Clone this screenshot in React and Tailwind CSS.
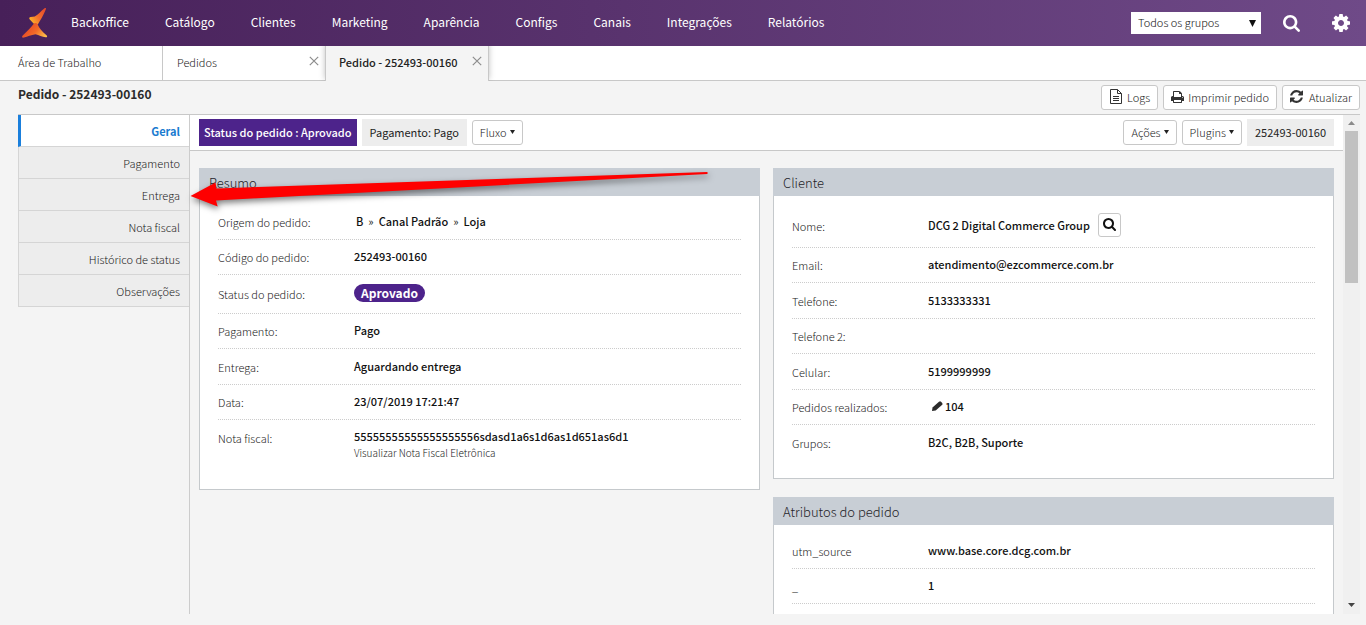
const NAV = ["Backoffice", "Catálogo", "Clientes", "Marketing", "Aparência", "Configs", "Canais", "Integrações", "Relatórios"];
const SECTIONS = ["Pagamento", "Entrega", "Nota fiscal", "Histórico de status", "Observações"];

function Logo() {
  return (
    <svg viewBox="0 0 40 38" className="h-[38px] w-10" aria-hidden="true">
      <defs>
        <linearGradient id="flameTop" x1="0" y1="0.6" x2="1" y2="0">
          <stop offset="0" stopColor="#fbae2a" />
          <stop offset="0.4" stopColor="#f4702c" />
          <stop offset="1" stopColor="#e2452c" />
        </linearGradient>
        <linearGradient id="flameBase" x1="0" y1="0.3" x2="1" y2="0.8">
          <stop offset="0" stopColor="#e23d26" />
          <stop offset="0.55" stopColor="#f26a28" />
          <stop offset="1" stopColor="#fdc04a" />
        </linearGradient>
      </defs>
      <path d="M28.300 4.400c1.100-.9 2-.4 1.600.8C27.500 11 24.500 16 21.800 20.500L17.800 19.800l-4-4.300c-1-1.100-.6-2.300.8-2.500l4.200-.5C22.500 10.500 25 7 28.300 4.400z" fill="url(#flameTop)" />
      <path d="M18 19.500c1.500-1 2.800-.5 3.600.8C23 24 26 27.500 30.500 31.200c1.200 1.200.6 2.300-.9 2.100C26 33 23 31 19.500 30.300 15 31 11.500 32.800 8 33.600c-1.700.4-2.500-.6-1.500-1.900C11 27.500 15 23.500 18 19.500z" fill="url(#flameBase)" />
    </svg>
  );
}

function SearchIcon({ className }) {
  return (
    <svg viewBox="0 0 1664 1664" className={className} fill="currentColor" aria-hidden="true">
      <path d="M1152 704q0-185-131.500-316.500t-316.500-131.500-316.500 131.500-131.500 316.500 131.500 316.500 316.500 131.500 316.500-131.500 131.500-316.500zm512 832q0 52-38 90t-90 38q-54 0-90-38l-343-342q-179 124-399 124-143 0-273.500-55.500t-225-150-150-225-55.500-273.500 55.500-273.500 150-225 225-150 273.500-55.500 273.500 55.500 225 150 150 225 55.500 273.500q0 220-124 399l343 343q37 37 37 90z" />
    </svg>
  );
}

function CogIcon() {
  return (
    <svg viewBox="0 128 1536 1536" className="size-[18px]" fill="currentColor" aria-hidden="true">
      <path d="M1024 896q0-106-75-181t-181-75-181 75-75 181 75 181 181 75 181-75 75-181zm512-109v222q0 12-8 23t-20 13l-185 28q-19 54-39 91 35 50 107 138 10 12 10 25t-9 23q-27 37-99 108t-94 71q-12 0-26-9l-138-108q-44 23-91 38-16 136-29 186-7 28-36 28h-222q-14 0-24.500-8.500t-11.500-21.500l-28-184q-49-16-90-37l-141 107q-10 9-25 9-14 0-25-11-126-114-165-168-7-10-7-23 0-12 8-23 15-21 51-66.500t54-70.500q-27-50-41-99l-183-27q-13-2-21-12.500t-8-23.500v-222q0-12 8-23t19-13l186-28q14-46 39-92-40-57-107-138-10-12-10-24 0-10 9-23 26-36 98.500-107.500t94.500-71.500q13 0 26 10l138 107q44-23 91-38 16-136 29-186 7-28 36-28h222q14 0 24.500 8.500t11.500 21.500l28 184q49 16 90 37l142-107q9-9 24-9 13 0 25 10 129 119 165 170 7 8 7 22 0 12-8 23-15 21-51 66.500t-54 70.500q26 50 41 98l183 28q13 2 21 12.500t8 23.500z" />
    </svg>
  );
}

function PrintIcon() {
  return (
    <svg viewBox="0 0 1664 1664" className="mr-1 mb-0.5 size-[13px]" fill="#333" aria-hidden="true">
      <path d="M384 1536h896v-256h-896v256zm0-640h896v-384h-160q-40 0-68-28t-28-68v-160h-640v640zm1152 64q0-26-19-45t-45-19-45 19-19 45 19 45 45 19 45-19 19-45zm128 0v416q0 13-9.500 22.500t-22.500 9.500h-224v160q0 40-28 68t-68 28h-960q-40 0-68-28t-28-68v-160h-224q-13 0-22.500-9.500t-9.500-22.500v-416q0-79 56.500-135.500t135.500-56.500h64v-544q0-40 28-68t68-28h672q40 0 88 20t76 48l152 152q28 28 48 76t20 88v256h64q79 0 135.500 56.500t56.500 135.500z" />
    </svg>
  );
}

function RefreshIcon() {
  return (
    <svg viewBox="0 128 1536 1536" className="mr-1.5 mb-0.5 size-[13px]" fill="#333" aria-hidden="true">
      <path d="M1511 1056q0 5-1 7-64 268-268 434.500t-478 166.500q-146 0-282.500-55t-243.500-157l-129 129q-19 19-45 19t-45-19-19-45v-448q0-26 19-45t45-19h448q26 0 45 19t19 45-19 45l-137 137q71 66 161 102t187 36q134 0 250-65t186-179q11-17 53-117 8-23 30-23h192q13 0 22.500 9.500t9.500 22.500zm25-800v448q0 26-19 45t-45 19h-448q-26 0-45-19t-19-45 19-45l138-138q-148-137-349-137-134 0-250 65t-186 179q-11 17-53 117-8 23-30 23h-199q-13 0-22.500-9.500t-9.500-22.500v-7q65-268 270-434.500t480-166.500q146 0 284 55.500t245 156.500l130-129q19-19 45-19t45 19 19 45z" />
    </svg>
  );
}

function CloseButton({ label }) {
  return (
    <button type="button" aria-label={label} className="text-[#8c8c8c]">
      <svg viewBox="0 0 10 10" className="size-[10px]" stroke="currentColor" strokeWidth="1.200">
        <path d="M.8.8l8.400 8.400M9.200.8L.8 9.200" />
      </svg>
    </button>
  );
}

function OutlineButton({ children }) {
  return (
    <button type="button" className="flex h-[25px] items-center rounded-[3px] border border-[#c8c8c8] bg-white px-[7px] text-[11px] font-light whitespace-nowrap text-[#222]">
      {children}
    </button>
  );
}

function Caret() {
  return (
    <svg viewBox="0 0 5 4" className="mb-0.5 ml-[3px] h-1 w-[5px]" fill="#222" aria-hidden="true">
      <path d="M0 0h5L2.500 4z" />
    </svg>
  );
}

function Card({ title, children }) {
  return (
    <section className="border border-t-0 border-[#c5c9cc] bg-white">
      <h2 className="-mx-px h-7 bg-[#c8ced5] px-2.5 text-[13px] leading-[29px] font-light text-[#1f2328]">{title}</h2>
      <dl className="px-[18px] pt-2 pb-[17px]">{children}</dl>
    </section>
  );
}

function Row({ label, children, size = "h-9 even:h-[35px]" }) {
  return (
    <div className={`${size} flex items-center border-b border-dotted border-[#ccc] leading-4 last:border-b-0`}>
      <dt className="w-[136px] shrink-0 font-light text-[#222]">{label}</dt>
      <dd className="min-w-0 pb-0.5 font-medium text-[#111]">{children}</dd>
    </div>
  );
}

function FlowArrow() {
  return (
    <svg viewBox="0 0 530 44" className="pointer-events-none absolute top-[168px] left-[186px] h-11 w-[530px] overflow-visible" aria-hidden="true">
      <path d="M4.500 28L29.500 14.500 30.500 20.500 521.500 4v2L30 32.500 31.700 38.500z" fill="#fe0000" className="drop-shadow-[1px_3px_3px_rgba(0,0,0,0.5)]" />
    </svg>
  );
}

export default function App() {
  return (
    <div className="relative flex h-screen flex-col overflow-hidden bg-[#f4f4f4] pb-[11px] font-['Noto_Sans_CJK_SC','Noto_Sans',sans-serif] text-[11px] text-[#222]">
      <header className="flex h-[46px] shrink-0 items-center bg-linear-to-r from-[#472059] to-[#6f4a88] pl-4 text-white">
        <Logo />
        <nav className="mb-0.5 ml-[15px] flex gap-9 text-[12px]">
          {NAV.map((item) => (
            <a key={item} href="#">{item}</a>
          ))}
        </nav>
        <div className="relative ml-auto">
          <select aria-label="Grupo" className="block h-[22px] w-[130px] appearance-none bg-white px-[7px] pb-0.5 text-[11px] leading-5 font-light text-[#111]">
            <option>Todos os grupos</option>
          </select>
          <svg viewBox="0 0 7 7" className="pointer-events-none absolute top-2 right-[5px] size-[7px]" fill="#111" aria-hidden="true">
            <path d="M0 0h7L3.500 7z" />
          </svg>
        </div>
        <button type="button" aria-label="Buscar" className="ml-[22px]"><SearchIcon className="size-[17px]" /></button>
        <button type="button" aria-label="Configurações" className="mr-4 ml-8"><CogIcon /></button>
      </header>

      <div className="flex h-[35px] shrink-0 border-b border-[#c8c8c8] bg-white leading-8">
        <a href="#" className="w-[163px] border-r border-[#c8c8c8] pl-[18px] font-light">Área de Trabalho</a>
        <div className="flex w-[162px] items-start justify-between pr-1.5 pl-3.5">
          <a href="#" className="font-light">Pedidos</a>
          <div className="flex pt-2.5"><CloseButton label="Fechar Pedidos" /></div>
        </div>
        <div className="-mb-px flex w-[164px] items-start justify-between border-x border-[#c8c8c8] bg-[#f4f4f4] pr-1.5 pl-[13px] shadow-[0_-2px_6px_rgba(0,0,0,0.25)] [clip-path:inset(0_-8px_0_-8px)]">
          <a href="#" className="font-medium">Pedido - 252493-00160</a>
          <div className="flex pt-2.5"><CloseButton label="Fechar Pedido" /></div>
        </div>
      </div>

      <div className="flex h-[33px] shrink-0 items-center justify-between pr-1.5 pl-[18px]">
        <h1 className="mb-2 text-[12px] font-bold text-[#2b2b2b]">Pedido - 252493-00160</h1>
        <div className="flex gap-[5px]">
          <OutlineButton>
            <svg viewBox="0 0 14 16" className="mr-1 mb-0.5 h-4 w-3.5" fill="none" stroke="#333" aria-hidden="true">
              <path d="M1.500.5h7l4 4v10h-11zM8.500.5v4h4M4 7.500h6M4 9.500h6M4 11.500h6" />
            </svg>
            Logs
          </OutlineButton>
          <OutlineButton><PrintIcon />Imprimir pedido</OutlineButton>
          <OutlineButton><RefreshIcon />Atualizar</OutlineButton>
        </div>
      </div>

      <div className="mr-1.5 ml-[18px] flex min-h-0 flex-1 border-t border-[#c8c8c8]">
        <nav className="flex w-[172px] shrink-0 flex-col border-r border-[#ccc] text-right leading-8">
          <a href="#" aria-current="page" className="h-8 border-b border-l-3 border-b-[#d5d5d5] border-l-[#1a7fdc] bg-white pr-[9px] font-bold text-[#1a7bd0]">Geral</a>
          {SECTIONS.map((item) => (
            <a key={item} href="#" className="h-8 border-b border-l border-[#d5d5d5] bg-[#ededed] pr-[9px] font-light">{item}</a>
          ))}
        </nav>

        <main className="flex min-w-0 flex-1 flex-col overflow-hidden">
          <div className="flex h-9 shrink-0 items-center gap-[5px] border-b border-[#c8c8c8] bg-white px-[9px]">
            <span className="bg-[#4d238b] px-[5px] leading-[27px] font-medium text-white">Status do pedido : Aprovado</span>
            <span className="bg-[#ededed] px-2 leading-[27px]">Pagamento: Pago</span>
            <OutlineButton>Fluxo<Caret /></OutlineButton>
            <div className="ml-auto flex items-center gap-[5px]">
              <OutlineButton>Ações<Caret /></OutlineButton>
              <OutlineButton>Plugins<Caret /></OutlineButton>
              <span className="bg-[#ededed] px-2 leading-[27px]">252493-00160</span>
            </div>
          </div>

          <div className="grid grid-cols-2 items-start gap-[13px] px-[9px] pt-[17px]">
            <Card title="Resumo">
              <Row label="Origem do pedido:">
                <span className="flex gap-[5px] pl-0.5">
                  <span>B</span><span className="font-normal">»</span>
                  <span>Canal Padrão</span><span className="font-normal">»</span>
                  <span>Loja</span>
                </span>
              </Row>
              <Row label="Código do pedido:">252493-00160</Row>
              <Row label="Status do pedido:" size="h-[39px]">
                <span className="block rounded-full bg-[#4d238b] px-[7px] text-[12px] leading-[18px] font-bold text-white">Aprovado</span>
              </Row>
              <Row label="Pagamento:">Pago</Row>
              <Row label="Entrega:">Aguardando entrega</Row>
              <Row label="Data:">23/07/2019 17:21:47</Row>
              <div className="flex h-[52px] items-start pt-2 leading-4">
                <dt className="w-[136px] shrink-0 pt-0.5 font-light">Nota fiscal:</dt>
                <dd className="min-w-0">
                  <span className="block font-medium text-[#111]">55555555555555555556sdasd1a6s1d6as1d651as6d1</span>
                  <a href="#" className="block text-[10px] leading-[18px] font-light">Visualizar Nota Fiscal Eletrônica</a>
                </dd>
              </div>
            </Card>

            <div className="flex flex-col gap-[18px]">
              <Card title="Cliente">
                <Row label="Nome:" size="h-11">
                  <span className="flex items-center gap-2">
                    DCG 2 Digital Commerce Group
                    <button type="button" aria-label="Ver cliente" className="flex h-6 w-[23px] items-center justify-center rounded-[3px] border border-[#c8c8c8] bg-white"><SearchIcon className="size-[13px]" /></button>
                  </span>
                </Row>
                <Row label="Email:">atendimento@ezcommerce.com.br</Row>
                <Row label="Telefone:">5133333331</Row>
                <Row label="Telefone 2:" />
                <Row label="Celular:">5199999999</Row>
                <Row label="Pedidos realizados:">
                  <span className="flex items-center gap-0.5 pl-1">
                    <svg viewBox="0 0 11 10" className="h-2.5 w-[11px]" fill="#2b2b2b" aria-hidden="true">
                      <path d="M0 10l.5-3.500L7 .8Q8 0 9 .7l1.200 1.200q.8.900 0 1.900L3.700 9.500z" />
                    </svg>
                    104
                  </span>
                </Row>
                <Row label="Grupos:">B2C, B2B, Suporte</Row>
              </Card>
              <Card title="Atributos do pedido">
                <Row label="utm_source">www.base.core.dcg.com.br</Row>
                <Row label="_">1</Row>
                <Row label="" />
              </Card>
            </div>
          </div>
        </main>

        <div className="flex w-[17px] shrink-0 flex-col items-center bg-[#f0f0f0]" aria-hidden="true">
          <svg viewBox="0 0 17 16" className="h-4 w-[17px] shrink-0" fill="#8a8a8a"><path d="M5 10h7L8.500 6z" /></svg>
          <div className="h-[152px] w-[13px] bg-[#c1c1c1]" />
          <svg viewBox="0 0 17 17" className="mt-auto size-[17px] shrink-0" fill="#444"><path d="M5 6h7L8.500 10z" /></svg>
        </div>
      </div>
      <FlowArrow />
    </div>
  );
}
